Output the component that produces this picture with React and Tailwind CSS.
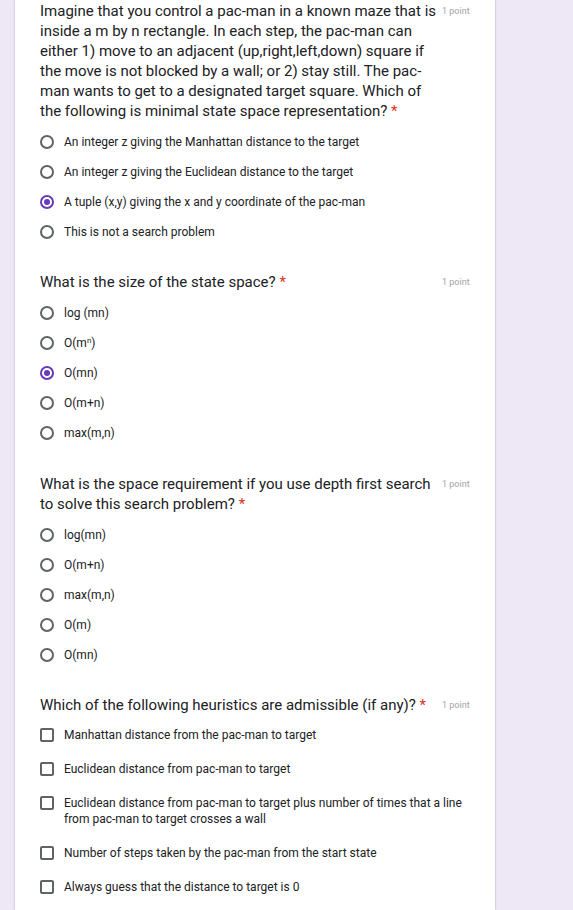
import React from "react";

const font = { fontFamily: "Roboto, 'Noto Sans', Arial, sans-serif" };

function Radio({ checked }) {
  return checked ? (
    <span className="shrink-0 w-[14px] h-[14px] rounded-full border-2 border-[#673ab7] flex items-center justify-center">
      <span className="w-[6px] h-[6px] rounded-full bg-[#673ab7]" />
    </span>
  ) : (
    <span className="shrink-0 w-[14px] h-[14px] rounded-full border-2 border-[#5f6368]" />
  );
}

function Title({ children }) {
  return (
    <div className="flex items-start">
      <div className="flex-1 pr-[5px] text-[15px] leading-[20px] text-[#202124]">
        {children}
        <span className="text-[#d93025]">&nbsp;*</span>
      </div>
      <div className="shrink-0 w-[28px] whitespace-nowrap text-[9px] leading-[20px] text-[#a0a4a8]">1 point</div>
    </div>
  );
}

function RadioList({ options, checked }) {
  return (
    <div className="mt-[6px] flex flex-col">
      {options.map((o, i) => (
        <div key={i} className="flex items-center h-[30px]">
          <Radio checked={i === checked} />
          <span className="ml-[10px] text-[12px] leading-4 text-[#202124]">{o}</span>
        </div>
      ))}
    </div>
  );
}

function CheckList({ options }) {
  return (
    <div className="mt-[3px] flex flex-col">
      {options.map((o, i) => (
        <div key={i} className="flex items-start py-[9px]">
          <span className="shrink-0 mt-[1px] w-[14px] h-[14px] rounded-[2px] border-2 border-[#5f6368]" />
          <span className="ml-[10px] text-[12px] leading-4 text-[#202124]">{o}</span>
        </div>
      ))}
    </div>
  );
}

export default function App() {
  return (
    <div className="min-h-[910px] h-[910px] overflow-hidden bg-[#ede7f6]" style={font}>
      <div className="ml-[15px] w-[480px] h-full bg-white shadow-[0_0_2px_rgba(60,40,90,0.35)] pl-[25px] pr-[25px]">
        <div className="pt-[1px]">
          <Title>
            Imagine that you control a pac-man in a known maze that is
            <br />
            inside a m by n rectangle. In each step, the pac-man can
            <br />
            either 1) move to an adjacent (up,right,left,down) square if
            <br />
            the move is not blocked by a wall; or 2) stay still. The pac-
            <br />
            man wants to get to a designated target square. Which of
            <br />
            the following is minimal state space representation?
          </Title>
          <RadioList
            checked={2}
            options={[
              "An integer z giving the Manhattan distance to the target",
              "An integer z giving the Euclidean distance to the target",
              "A tuple (x,y) giving the x and y coordinate of the pac-man",
              "This is not a search problem",
            ]}
          />
        </div>
        <div className="pt-[25px]">
          <Title>What is the size of the state space?</Title>
          <RadioList
            checked={2}
            options={[
              "log (mn)",
              <>O(m<sup className="text-[8px] leading-none">n</sup>)</>,
              "O(mn)",
              "O(m+n)",
              "max(m,n)",
            ]}
          />
        </div>
        <div className="pt-[26px]">
          <Title>What is the space requirement if you use depth first search to solve this search problem?</Title>
          <RadioList
            checked={-1}
            options={["log(mn)", "O(m+n)", "max(m,n)", "O(m)", "O(mn)"]}
          />
        </div>
        <div className="pt-[25px]">
          <Title>Which of the following heuristics are admissible (if any)?</Title>
          <CheckList
            options={[
              "Manhattan distance from the pac-man to target",
              "Euclidean distance from pac-man to target",
              "Euclidean distance from pac-man to target plus number of times that a line from pac-man to target crosses a wall",
              "Number of steps taken by the pac-man from the start state",
              "Always guess that the distance to target is 0",
            ]}
          />
        </div>
      </div>
    </div>
  );
}
